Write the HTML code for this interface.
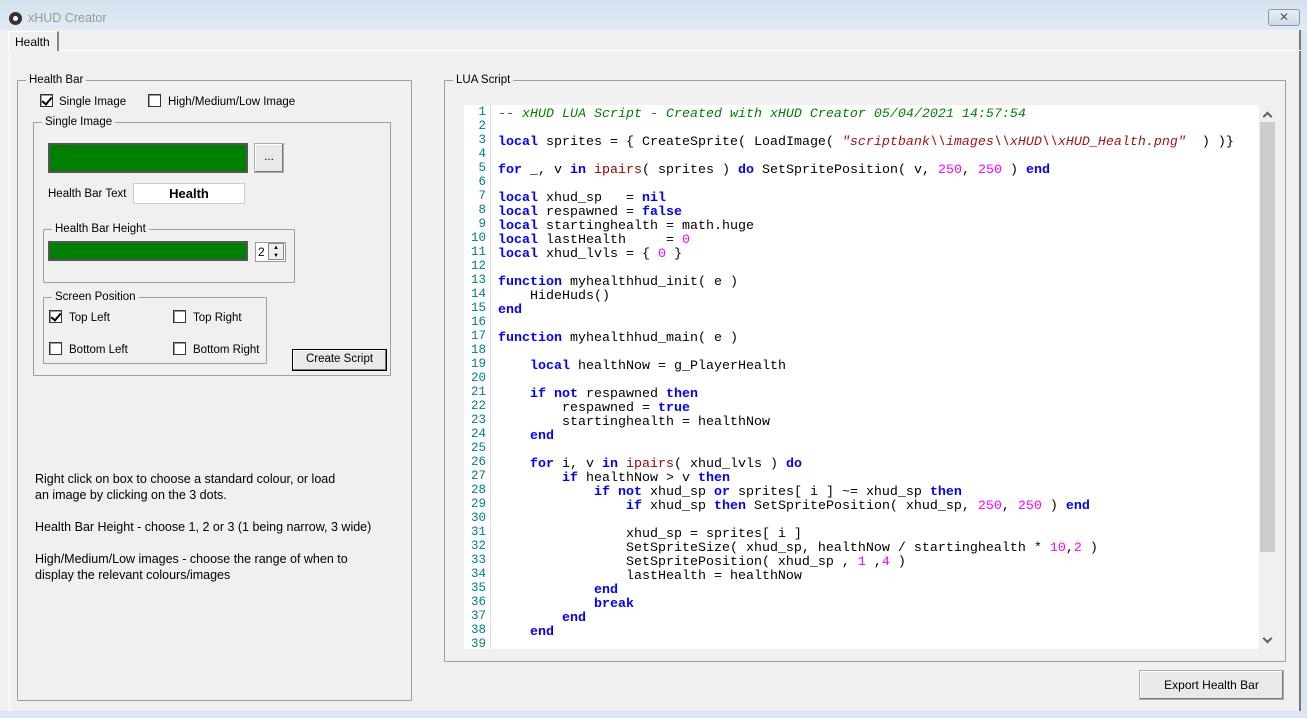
<!DOCTYPE html>
<html><head><meta charset="utf-8"><style>
*{box-sizing:border-box;margin:0;padding:0}
body{width:1307px;height:718px;position:relative;overflow:hidden;background:#dbe6f3;font-family:"Liberation Sans",sans-serif;font-size:12px;color:#000}
.a{position:absolute}
.gb{position:absolute;border:1px solid #a0a0a0;border-radius:1px}
.gl{position:absolute;top:-8px;left:8px;background:#f0f0f0;padding:0 3px;font-size:11.5px;line-height:14px}
.cb{position:absolute;width:13px;height:13px;border:1px solid #333;background:#fff;box-shadow:inset 1px 1px 0 #999}
.cb.c::after{content:"";position:absolute;left:3px;top:0px;width:4px;height:8px;border:solid #000;border-width:0 2px 2px 0;transform:rotate(40deg)}
.lbl{position:absolute;font-size:11.5px;line-height:14px}
.green{position:absolute;background:#008000;border:2px solid #555}
.btn{position:absolute;background:#e9e9e9;border:1px solid #adadad;text-align:center;font-size:11.5px;box-shadow:inset -1px -1px 0 #777,inset 1px 1px 0 #fff}
pre{font-family:"Liberation Mono",monospace;font-size:13.33px;line-height:14px}
.k{color:#0000ff;font-weight:bold}.c{color:#008000;font-style:italic}.s{color:#a31515;font-style:italic}.n{color:#ff00ff}.f{color:#a00000}
.ln{color:#008080;text-align:right;font-size:12.5px}
.help{font-size:12.5px;line-height:16px}
.chev{position:absolute;width:7px;height:7px;border:solid #606060;border-width:2px 0 0 2px}
</style></head><body>
<div class="a" style="left:0;top:0;width:1307px;height:30px;background:linear-gradient(#d5e1ef,#e1eaf5)"></div>
<div class="a" style="left:9px;top:12px;width:13px;height:13px;border-radius:50%;background:#333"></div>
<div class="a" style="left:13px;top:16px;width:5px;height:5px;border-radius:50%;background:#fff"></div>
<div class="a" style="left:28px;top:11px;font-size:12.5px;color:#9a9a9a">xHUD Creator</div>
<div class="a" style="left:1268px;top:9px;width:32px;height:17px;border:1px solid #8a9ab0;border-radius:3px;background:linear-gradient(#e8eef6,#cfdbe9);text-align:center;font-size:12px;line-height:14px;color:#555">✕</div>
<div class="a" style="left:0;top:30px;width:1301px;height:681px;background:#f0f0f0;border-right:2px solid #777"></div>
<div class="a" style="left:9px;top:50px;width:1292px;height:661px;border-top:1px solid #fff;border-left:1px solid #fff"></div>
<div class="a" style="left:8px;top:31px;width:51px;height:20px;background:#f0f0f0;border:1px solid #fff;border-right:2px solid #888;border-bottom:none;padding:3px 0 0 6px;font-size:12px">Health</div>

<div class="gb" style="left:17px;top:80px;width:395px;height:621px"><span class="gl">Health Bar</span></div>
<div class="cb c" style="left:40px;top:94px"></div><span class="lbl" style="left:59px;top:95px">Single Image</span>
<div class="cb" style="left:148px;top:94px"></div><span class="lbl" style="left:168px;top:95px">High/Medium/Low Image</span>
<div class="gb" style="left:33px;top:122px;width:358px;height:254px"><span class="gl">Single Image</span></div>
<div class="green" style="left:48px;top:143px;width:200px;height:30px"></div>
<div class="btn" style="left:254px;top:143px;width:30px;height:30px;line-height:27px">...</div>
<span class="lbl" style="left:48px;top:187px">Health Bar Text</span>
<div class="a" style="left:133px;top:183px;width:112px;height:21px;background:#fff;border:1px solid #ccc;text-align:center;font-weight:bold;font-size:13px;line-height:19px">Health</div>
<div class="gb" style="left:43px;top:229px;width:252px;height:54px"><span class="gl">Health Bar Height</span></div>
<div class="green" style="left:48px;top:241px;width:200px;height:20px"></div>
<div class="a" style="left:255px;top:242px;width:31px;height:20px;background:#fff;border:1px solid #999;font-size:12px;line-height:18px;padding-left:2px">2</div>
<div class="a" style="left:268px;top:243px;width:16px;height:17px;border:1px solid #888;background:#eee;font-size:6px;line-height:8px;text-align:center">▲<br>▼</div>
<div class="gb" style="left:43px;top:297px;width:224px;height:67px"><span class="gl">Screen Position</span></div>
<div class="cb c" style="left:49px;top:310px"></div><span class="lbl" style="left:69px;top:311px">Top Left</span>
<div class="cb" style="left:173px;top:310px"></div><span class="lbl" style="left:193px;top:311px">Top Right</span>
<div class="cb" style="left:49px;top:342px"></div><span class="lbl" style="left:69px;top:343px">Bottom Left</span>
<div class="cb" style="left:173px;top:342px"></div><span class="lbl" style="left:193px;top:343px">Bottom Right</span>
<div class="btn" style="left:292px;top:349px;width:95px;height:22px;line-height:19px;border:1px solid #000">Create Script</div>
<div class="a help" style="left:35px;top:471px">Right click on box to choose a standard colour, or load<br>an image by clicking on the 3 dots.<br><br>Health Bar Height - choose 1, 2 or 3 (1 being narrow, 3 wide)<br><br>High/Medium/Low images - choose the range of when to<br>display the relevant colours/images</div>

<div class="gb" style="left:444px;top:80px;width:842px;height:582px"><span class="gl">LUA Script</span></div>
<div class="a" style="left:464px;top:105px;width:812px;height:544px;background:#fff;overflow:hidden">
<pre class="a ln" style="left:0;top:0px;width:22px">1
2
3
4
5
6
7
8
9
10
11
12
13
14
15
16
17
18
19
20
21
22
23
24
25
26
27
28
29
30
31
32
33
34
35
36
37
38
39</pre>
<div class="a" style="left:26px;top:0;width:1px;height:544px;background:#ddd"></div>
<pre class="a" style="left:34px;top:3px"><span class="c">-- xHUD LUA Script - Created with xHUD Creator 05/04/2021 14:57:54</span>

<span class="k">local</span> sprites = { CreateSprite( LoadImage( <span class="s">"scriptbank\\images\\xHUD\\xHUD_Health.png"</span>  ) )}

<span class="k">for</span> _, v <span class="k">in</span> <span class="f">ipairs</span>( sprites ) <span class="k">do</span> SetSpritePosition( v, <span class="n">250</span>, <span class="n">250</span> ) <span class="k">end</span>

<span class="k">local</span> xhud_sp   = <span class="k">nil</span>
<span class="k">local</span> respawned = <span class="k">false</span>
<span class="k">local</span> startinghealth = math.huge
<span class="k">local</span> lastHealth     = <span class="n">0</span>
<span class="k">local</span> xhud_lvls = { <span class="n">0</span> }

<span class="k">function</span> myhealthhud_init( e )
    HideHuds()
<span class="k">end</span>

<span class="k">function</span> myhealthhud_main( e )

    <span class="k">local</span> healthNow = g_PlayerHealth

    <span class="k">if not</span> respawned <span class="k">then</span>
        respawned = <span class="k">true</span>
        startinghealth = healthNow
    <span class="k">end</span>

    <span class="k">for</span> i, v <span class="k">in</span> <span class="f">ipairs</span>( xhud_lvls ) <span class="k">do</span>
        <span class="k">if</span> healthNow &gt; v <span class="k">then</span>
            <span class="k">if not</span> xhud_sp <span class="k">or</span> sprites[ i ] ~= xhud_sp <span class="k">then</span>
                <span class="k">if</span> xhud_sp <span class="k">then</span> SetSpritePosition( xhud_sp, <span class="n">250</span>, <span class="n">250</span> ) <span class="k">end</span>

                xhud_sp = sprites[ i ]
                SetSpriteSize( xhud_sp, healthNow / startinghealth * <span class="n">10</span>,<span class="n">2</span> )
                SetSpritePosition( xhud_sp , <span class="n">1</span> ,<span class="n">4</span> )
                lastHealth = healthNow
            <span class="k">end</span>
            <span class="k">break</span>
        <span class="k">end</span>
    <span class="k">end</span>
</pre>
<div class="a" style="left:795px;top:0;width:17px;height:544px;background:#f0f0f0"></div>
<div class="a" style="left:796px;top:17px;width:15px;height:430px;background:#cdcdcd"></div>
<div class="chev" style="left:800px;top:8px;transform:rotate(45deg)"></div>
<div class="chev" style="left:800px;top:530px;transform:rotate(225deg)"></div>
</div>
<div class="btn" style="left:1139px;top:670px;width:145px;height:30px;line-height:28px;font-size:12px">Export Health Bar</div>
</body></html>
